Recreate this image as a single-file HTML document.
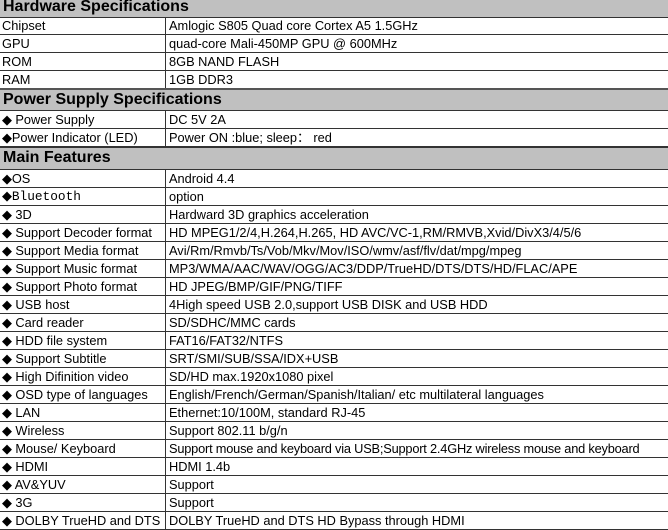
<!DOCTYPE html><html><head><style>
body{margin:0;width:668px;height:528px;overflow:hidden;background:#fff;font-family:"Liberation Sans",sans-serif;color:#000}
.r{position:absolute;left:0;width:668px;border-bottom:1px solid #333;box-sizing:border-box}
.h{background:#c0c0c0;font-weight:bold;font-size:16px;padding-left:3px;line-height:20px}
.d{height:18px;font-size:12.8px;line-height:18px}
.a{position:absolute;left:2px;top:0;white-space:nowrap}
.b{position:absolute;left:165px;top:0;height:17px;border-left:1px solid #333;padding-left:3px;white-space:nowrap;line-height:18px}
</style></head><body>
<div class="r h" style="top:-3px;height:21px">Hardware Specifications</div>
<div class="r d" style="top:17px"><span class="a">Chipset</span><span class="b">Amlogic S805 Quad core Cortex A5 1.5GHz</span></div>
<div class="r d" style="top:35px"><span class="a">GPU</span><span class="b">quad-core Mali-450MP GPU @ 600MHz</span></div>
<div class="r d" style="top:53px"><span class="a">ROM</span><span class="b">8GB NAND FLASH</span></div>
<div class="r d" style="top:71px"><span class="a">RAM</span><span class="b">1GB DDR3</span></div>
<div class="r h" style="top:88px;height:23px;border-top:2px solid #555">Power Supply Specifications</div>
<div class="r d" style="top:111px"><span class="a">◆ Power Supply</span><span class="b">DC 5V 2A</span></div>
<div class="r d" style="top:129px"><span class="a">◆Power Indicator (LED)</span><span class="b">Power ON :blue; sleep： red</span></div>
<div class="r h" style="top:147px;height:23px;border-top:1px solid #333">Main Features</div>
<div class="r d" style="top:170px"><span class="a">◆OS</span><span class="b">Android 4.4</span></div>
<div class="r d" style="top:188px"><span class="a" style="font-family:'Liberation Mono',monospace">◆Bluetooth</span><span class="b">option</span></div>
<div class="r d" style="top:206px"><span class="a">◆ 3D</span><span class="b">Hardward 3D graphics acceleration</span></div>
<div class="r d" style="top:224px"><span class="a">◆ Support Decoder format</span><span class="b"> HD MPEG1/2/4,H.264,H.265, HD AVC/VC-1,RM/RMVB,Xvid/DivX3/4/5/6</span></div>
<div class="r d" style="top:242px"><span class="a">◆ Support Media format</span><span class="b">Avi/Rm/Rmvb/Ts/Vob/Mkv/Mov/ISO/wmv/asf/flv/dat/mpg/mpeg</span></div>
<div class="r d" style="top:260px"><span class="a">◆ Support Music format</span><span class="b">MP3/WMA/AAC/WAV/OGG/AC3/DDP/TrueHD/DTS/DTS/HD/FLAC/APE</span></div>
<div class="r d" style="top:278px"><span class="a">◆ Support Photo format</span><span class="b">HD JPEG/BMP/GIF/PNG/TIFF</span></div>
<div class="r d" style="top:296px"><span class="a">◆ USB host</span><span class="b">4High speed USB 2.0,support USB DISK and USB HDD</span></div>
<div class="r d" style="top:314px"><span class="a">◆ Card reader</span><span class="b">SD/SDHC/MMC cards</span></div>
<div class="r d" style="top:332px"><span class="a">◆ HDD file system</span><span class="b">FAT16/FAT32/NTFS</span></div>
<div class="r d" style="top:350px"><span class="a">◆ Support Subtitle</span><span class="b">SRT/SMI/SUB/SSA/IDX+USB</span></div>
<div class="r d" style="top:368px"><span class="a">◆ High Difinition video</span><span class="b">SD/HD max.1920x1080 pixel</span></div>
<div class="r d" style="top:386px"><span class="a">◆ OSD type of languages</span><span class="b">English/French/German/Spanish/Italian/ etc multilateral languages</span></div>
<div class="r d" style="top:404px"><span class="a">◆ LAN</span><span class="b">Ethernet:10/100M, standard RJ-45</span></div>
<div class="r d" style="top:422px"><span class="a">◆ Wireless</span><span class="b">Support 802.11 b/g/n</span></div>
<div class="r d" style="top:440px"><span class="a">◆ Mouse/ Keyboard</span><span class="b" style="letter-spacing:-0.2px">Support mouse and keyboard via USB;Support 2.4GHz wireless mouse and keyboard</span></div>
<div class="r d" style="top:458px"><span class="a">◆ HDMI</span><span class="b"> HDMI 1.4b</span></div>
<div class="r d" style="top:476px"><span class="a">◆ AV&amp;YUV</span><span class="b">Support</span></div>
<div class="r d" style="top:494px"><span class="a">◆ 3G</span><span class="b">Support</span></div>
<div class="r d" style="top:512px"><span class="a">◆ DOLBY TrueHD and DTS</span><span class="b">DOLBY TrueHD and DTS HD Bypass through HDMI</span></div>
</body></html>
